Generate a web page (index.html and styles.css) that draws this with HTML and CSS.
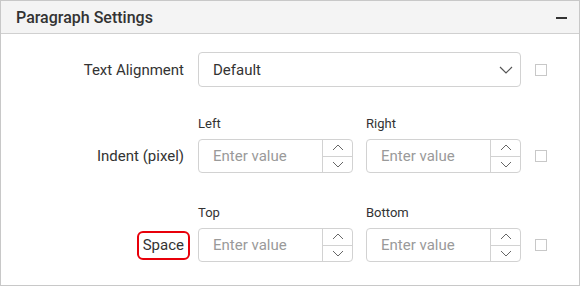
FILE: index.html
```html
<!DOCTYPE html>
<html lang="en">

<head>
    <meta charset="UTF-8">
    <title>Paragraph Settings</title>
    <link rel="stylesheet" href="styles.css">
</head>

<body>
    <div class="panel">
        <div class="panel-header">
            <span class="panel-title">Paragraph Settings</span>
            <span class="collapse-icon"></span>
        </div>

        <div class="panel-body">
            <div class="row">
                <div class="row-label">Text Alignment</div>
                <div class="row-field">
                    <div class="dropdown">
                        <span>Default</span>
                        <svg class="chevron" width="14" height="8" viewBox="0 0 14 8">
                            <path d="M1 1 L7 7 L13 1" fill="none" stroke="#555" stroke-width="1.2" />
                        </svg>
                    </div>
                </div>
                <div class="check"></div>
            </div>

            <div class="row row-pair">
                <div class="row-label">Indent (pixel)</div>
                <div class="row-field pair">
                    <div class="pair-item">
                        <div class="sub-label">Left</div>
                        <div class="numeric">
                            <input type="text" placeholder="Enter value">
                            <div class="spin">
                                <div class="spin-btn">
                                    <svg width="12" height="7" viewBox="0 0 12 7"><path d="M1 6 L6 1 L11 6" fill="none" stroke="#666" stroke-width="1" /></svg>
                                </div>
                                <div class="spin-btn">
                                    <svg width="12" height="7" viewBox="0 0 12 7"><path d="M1 1 L6 6 L11 1" fill="none" stroke="#666" stroke-width="1" /></svg>
                                </div>
                            </div>
                        </div>
                    </div>
                    <div class="pair-item">
                        <div class="sub-label">Right</div>
                        <div class="numeric">
                            <input type="text" placeholder="Enter value">
                            <div class="spin">
                                <div class="spin-btn">
                                    <svg width="12" height="7" viewBox="0 0 12 7"><path d="M1 6 L6 1 L11 6" fill="none" stroke="#666" stroke-width="1" /></svg>
                                </div>
                                <div class="spin-btn">
                                    <svg width="12" height="7" viewBox="0 0 12 7"><path d="M1 1 L6 6 L11 1" fill="none" stroke="#666" stroke-width="1" /></svg>
                                </div>
                            </div>
                        </div>
                    </div>
                </div>
                <div class="check"></div>
            </div>

            <div class="row row-pair row-last">
                <div class="row-label"><span class="highlight">Space</span></div>
                <div class="row-field pair">
                    <div class="pair-item">
                        <div class="sub-label">Top</div>
                        <div class="numeric">
                            <input type="text" placeholder="Enter value">
                            <div class="spin">
                                <div class="spin-btn">
                                    <svg width="12" height="7" viewBox="0 0 12 7"><path d="M1 6 L6 1 L11 6" fill="none" stroke="#666" stroke-width="1" /></svg>
                                </div>
                                <div class="spin-btn">
                                    <svg width="12" height="7" viewBox="0 0 12 7"><path d="M1 1 L6 6 L11 1" fill="none" stroke="#666" stroke-width="1" /></svg>
                                </div>
                            </div>
                        </div>
                    </div>
                    <div class="pair-item">
                        <div class="sub-label">Bottom</div>
                        <div class="numeric">
                            <input type="text" placeholder="Enter value">
                            <div class="spin">
                                <div class="spin-btn">
                                    <svg width="12" height="7" viewBox="0 0 12 7"><path d="M1 6 L6 1 L11 6" fill="none" stroke="#666" stroke-width="1" /></svg>
                                </div>
                                <div class="spin-btn">
                                    <svg width="12" height="7" viewBox="0 0 12 7"><path d="M1 1 L6 6 L11 1" fill="none" stroke="#666" stroke-width="1" /></svg>
                                </div>
                            </div>
                        </div>
                    </div>
                </div>
                <div class="check"></div>
            </div>
        </div>
    </div>
</body>

</html>
```

FILE: styles.css
```css
body {
    margin: 0;
    font-family: Roboto, "Liberation Sans", sans-serif;
    color: #333;
    background: #fff;
}

.panel {
    width: 580px;
    height: 286px;
    box-sizing: border-box;
    border: 1px solid #c8c8c8;
}

.panel-header {
    height: 32px;
    background-color: #f4f4f4;
    border-bottom: 1px solid #d0d0d0;
    display: flex;
    align-items: center;
    justify-content: space-between;
    padding: 0 12px 0 15px;
}

.panel-title {
    font-size: 16px;
    font-weight: 500;
    color: #333;
}

.collapse-icon {
    width: 11px;
    height: 2px;
    background-color: #333;
    margin-top: 1px;
}

.panel-body {
    padding-top: 18px;
}

.row {
    display: flex;
    align-items: center;
}

.row-pair {
    align-items: flex-end;
    margin-top: 29px;
}

.row-last {
    margin-top: 32px;
}

.row-label {
    width: 183px;
    text-align: right;
    font-size: 15px;
    color: #333;
    flex-shrink: 0;
}

.row-pair .row-label {
    height: 34px;
    line-height: 34px;
}

.row-field {
    width: 323px;
    margin-left: 14px;
}

.check {
    width: 10px;
    height: 10px;
    border: 1px solid #c8c8c8;
    margin-left: 14px;
}

.row-pair .check {
    margin-bottom: 11px;
}

.dropdown {
    height: 35px;
    box-sizing: border-box;
    border: 1px solid #d2d2d2;
    border-radius: 4px;
    display: flex;
    align-items: center;
    justify-content: space-between;
    padding: 0 7px 0 14px;
    font-size: 15px;
}

.pair {
    display: flex;
    gap: 13px;
}

.pair-item {
    width: 155px;
}

.sub-label {
    font-size: 13px;
    line-height: 16px;
    color: #333;
    margin-bottom: 7px;
}

.numeric {
    height: 34px;
    box-sizing: border-box;
    border: 1px solid #d2d2d2;
    border-radius: 4px;
    display: flex;
}

.numeric input {
    flex: 1;
    min-width: 0;
    border: 0;
    outline: none;
    background: transparent;
    padding: 0 0 0 14px;
    font-family: inherit;
    font-size: 15px;
    color: #333;
}

.numeric input::placeholder {
    color: #9a9a9a;
}

.spin {
    width: 29px;
    border-left: 1px solid #d2d2d2;
    display: flex;
    flex-direction: column;
}

.spin-btn {
    flex: 1;
    display: flex;
    align-items: center;
    justify-content: center;
}

.spin-btn + .spin-btn {
    border-top: 1px solid #d2d2d2;
}

.highlight {
    display: inline-block;
    line-height: 25px;
    padding: 0 4px;
    border: 2px solid #e8000a;
    border-radius: 6px;
    margin-right: -6px;
}
```
